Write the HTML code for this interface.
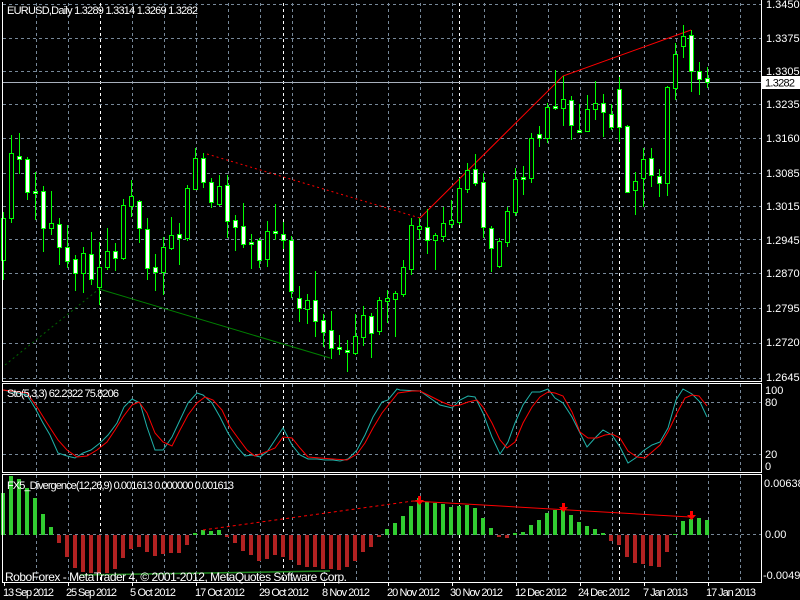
<!DOCTYPE html>
<html><head><meta charset="utf-8"><style>
html,body{margin:0;padding:0;background:#000;width:800px;height:600px;overflow:hidden}
svg{display:block}
text{font-family:"Liberation Sans",sans-serif;font-size:11px;fill:#fff}
</style></head><body>
<svg width="800" height="600" viewBox="0 0 800 600" xmlns="http://www.w3.org/2000/svg" shape-rendering="crispEdges">
<rect width="800" height="600" fill="#000"/>
<!-- grid vertical -->
<g stroke="#778899" stroke-dasharray="3,3" stroke-width="1">
<path d="M36.5 3V381M68.5 3V381M132.5 3V381M164.5 3V381M196.5 3V381M228.5 3V381M260.5 3V381M292.5 3V381M324.5 3V381M356.5 3V381M388.5 3V381M420.5 3V381M452.5 3V381M484.5 3V381M516.5 3V381M548.5 3V381M580.5 3V381M612.5 3V381M644.5 3V381M676.5 3V381M708.5 3V381M740.5 3V381"/>
<path d="M36.5 384V471M68.5 384V471M132.5 384V471M164.5 384V471M196.5 384V471M228.5 384V471M260.5 384V471M292.5 384V471M324.5 384V471M356.5 384V471M388.5 384V471M420.5 384V471M452.5 384V471M484.5 384V471M516.5 384V471M548.5 384V471M580.5 384V471M612.5 384V471M644.5 384V471M676.5 384V471M708.5 384V471M740.5 384V471"/>
<path d="M36.5 475V581M68.5 475V581M132.5 475V581M164.5 475V581M196.5 475V581M228.5 475V581M260.5 475V581M292.5 475V581M324.5 475V581M356.5 475V581M388.5 475V581M420.5 475V581M452.5 475V581M484.5 475V581M516.5 475V581M548.5 475V581M580.5 475V581M612.5 475V581M644.5 475V581M676.5 475V581M708.5 475V581M740.5 475V581"/>
<path d="M3 4.5H761M3 38.5H761M3 71.5H761M3 104.5H761M3 138.5H761M3 173.5H761M3 206.5H761M3 239.5H761M3 273.5H761M3 308.5H761M3 343.5H761M3 378.5H761"/>
<path d="M3 402.5H761M3 454.5H761M3 534.5H761"/>
</g>
<g stroke="#fff" stroke-dasharray="3,3" stroke-width="1">
<path d="M100.5 3V381M283.5 3V381M459.5 3V381M619.5 3V381M100.5 384V471M283.5 384V471M459.5 384V471M619.5 384V471M100.5 475V581M283.5 475V581M459.5 475V581M619.5 475V581"/>
</g>
<!-- bid line -->
<path d="M3 82.5H761" stroke="#a8b0bc" stroke-width="1"/>
<!-- trendlines -->
<g fill="none" shape-rendering="auto">
<path d="M207 154L420 218" stroke="#ff0000" stroke-dasharray="2,3"/>
<path d="M420 218L563 76L691 30" stroke="#ff0000"/>
<path d="M5 365L99 289" stroke="#006400" stroke-dasharray="2,3"/>
<path d="M99 289L330 358" stroke="#008000"/>
</g>
<!-- candles -->
<g stroke="#00ff00" stroke-width="1">
<path d="M3.5 212V280M11.5 135V223M19.5 133V174M27.5 157V200M35.5 172V220M43.5 186V252M51.5 191V235M59.5 218V265M67.5 225V268M75.5 255V291M83.5 247V293M91.5 232V285M99.5 242V305M107.5 228V270M115.5 243V271M123.5 199V260M131.5 180V217M139.5 200V243M147.5 218V280M155.5 254V291M163.5 237V295M171.5 217V250M179.5 223V265M187.5 185V241M195.5 148V190M203.5 153V188M211.5 178V208M219.5 175V206M227.5 175V238M235.5 215V251M243.5 203V248M251.5 234V269M259.5 238V268M267.5 221V267M275.5 204V240M283.5 222V249M291.5 236V298M299.5 286V322M307.5 294V324M315.5 271V337M323.5 314V347M331.5 311V359M339.5 335V355M347.5 340V372M355.5 314V355M363.5 306V346M371.5 313V358M379.5 297V335M387.5 290V323M395.5 291V337M403.5 260V297M411.5 218V275M419.5 218V239M427.5 209V254M435.5 233V270M443.5 207V242M451.5 200V228M459.5 178V225M467.5 163V193M475.5 154V186M483.5 173V238M491.5 226V272M499.5 238V268M507.5 207V247M515.5 168V216M523.5 166V195M531.5 133V183M539.5 126V147M547.5 103V143M555.5 70V110M563.5 76V126M571.5 96V140M579.5 104V133M587.5 95V132M595.5 81V120M603.5 94V137M611.5 104V130M619.5 77V142M627.5 125V193M635.5 172V215M643.5 148V207M651.5 148V187M659.5 169V197M667.5 86V196M675.5 43V100M683.5 25V58M691.5 30V92M699.5 62V95M707.5 67V88"/>
</g>
<g stroke="#00ff00" stroke-width="1" fill="#000">
<rect x="1.5" y="218.5" width="4" height="42"/>
<rect x="9.5" y="153.5" width="4" height="65"/>
<rect x="49.5" y="223.5" width="4" height="5"/>
<rect x="81.5" y="253.5" width="4" height="20"/>
<rect x="97.5" y="267.5" width="4" height="20"/>
<rect x="105.5" y="251.5" width="4" height="16"/>
<rect x="121.5" y="205.5" width="4" height="53"/>
<rect x="129.5" y="196.5" width="4" height="10"/>
<rect x="161.5" y="247.5" width="4" height="25"/>
<rect x="169.5" y="235.5" width="4" height="13"/>
<rect x="185.5" y="188.5" width="4" height="50"/>
<rect x="193.5" y="158.5" width="4" height="31"/>
<rect x="217.5" y="186.5" width="4" height="18"/>
<rect x="265.5" y="231.5" width="4" height="28"/>
<rect x="305.5" y="300.5" width="4" height="9"/>
<rect x="353.5" y="336.5" width="4" height="17"/>
<rect x="361.5" y="315.5" width="4" height="22"/>
<rect x="377.5" y="300.5" width="4" height="31"/>
<rect x="385.5" y="298.5" width="4" height="3"/>
<rect x="393.5" y="293.5" width="4" height="6"/>
<rect x="401.5" y="267.5" width="4" height="27"/>
<rect x="409.5" y="225.5" width="4" height="44"/>
<rect x="417.5" y="226.5" width="4" height="3"/>
<rect x="433.5" y="235.5" width="4" height="5"/>
<rect x="441.5" y="223.5" width="4" height="13"/>
<rect x="449.5" y="220.5" width="4" height="4"/>
<rect x="457.5" y="188.5" width="4" height="34"/>
<rect x="465.5" y="170.5" width="4" height="19"/>
<rect x="497.5" y="241.5" width="4" height="25"/>
<rect x="505.5" y="211.5" width="4" height="31"/>
<rect x="513.5" y="179.5" width="4" height="33"/>
<rect x="529.5" y="138.5" width="4" height="40"/>
<rect x="545.5" y="107.5" width="4" height="31"/>
<rect x="561.5" y="99.5" width="4" height="9"/>
<rect x="585.5" y="109.5" width="4" height="22"/>
<rect x="593.5" y="103.5" width="4" height="6"/>
<rect x="633.5" y="181.5" width="4" height="9"/>
<rect x="641.5" y="159.5" width="4" height="19"/>
<rect x="665.5" y="87.5" width="4" height="96"/>
<rect x="673.5" y="54.5" width="4" height="34"/>
<rect x="681.5" y="36.5" width="4" height="10"/>
</g>
<g stroke="#00ff00" stroke-width="1" fill="#fff">
<rect x="17.5" y="156.5" width="4" height="3"/>
<rect x="25.5" y="159.5" width="4" height="33"/>
<rect x="33.5" y="191.5" width="4" height="2"/>
<rect x="41.5" y="191.5" width="4" height="37"/>
<rect x="57.5" y="224.5" width="4" height="23"/>
<rect x="65.5" y="247.5" width="4" height="14"/>
<rect x="73.5" y="259.5" width="4" height="14"/>
<rect x="89.5" y="254.5" width="4" height="25"/>
<rect x="113.5" y="251.5" width="4" height="7"/>
<rect x="137.5" y="201.5" width="4" height="27"/>
<rect x="145.5" y="229.5" width="4" height="39"/>
<rect x="153.5" y="267.5" width="4" height="5"/>
<rect x="177.5" y="234.5" width="4" height="4"/>
<rect x="201.5" y="158.5" width="4" height="24"/>
<rect x="209.5" y="182.5" width="4" height="20"/>
<rect x="225.5" y="185.5" width="4" height="36"/>
<rect x="233.5" y="220.5" width="4" height="7"/>
<rect x="241.5" y="226.5" width="4" height="18"/>
<rect x="249.5" y="242.5" width="4" height="2"/>
<rect x="257.5" y="240.5" width="4" height="20"/>
<rect x="273.5" y="231.5" width="4" height="2"/>
<rect x="281.5" y="234.5" width="4" height="6"/>
<rect x="289.5" y="240.5" width="4" height="51"/>
<rect x="297.5" y="298.5" width="4" height="10"/>
<rect x="313.5" y="300.5" width="4" height="21"/>
<rect x="321.5" y="320.5" width="4" height="12"/>
<rect x="329.5" y="330.5" width="4" height="18"/>
<rect x="337.5" y="347.5" width="4" height="2"/>
<rect x="345.5" y="350.5" width="4" height="2"/>
<rect x="369.5" y="316.5" width="4" height="17"/>
<rect x="425.5" y="227.5" width="4" height="13"/>
<rect x="473.5" y="169.5" width="4" height="14"/>
<rect x="481.5" y="182.5" width="4" height="45"/>
<rect x="489.5" y="228.5" width="4" height="20"/>
<rect x="521.5" y="177.5" width="4" height="2"/>
<rect x="537.5" y="134.5" width="4" height="4"/>
<rect x="553.5" y="106.5" width="4" height="2"/>
<rect x="569.5" y="100.5" width="4" height="25"/>
<rect x="577.5" y="130.5" width="4" height="2"/>
<rect x="601.5" y="103.5" width="4" height="9"/>
<rect x="609.5" y="114.5" width="4" height="13"/>
<rect x="617.5" y="89.5" width="4" height="38"/>
<rect x="625.5" y="126.5" width="4" height="66"/>
<rect x="649.5" y="158.5" width="4" height="17"/>
<rect x="657.5" y="176.5" width="4" height="7"/>
<rect x="689.5" y="35.5" width="4" height="36"/>
<rect x="697.5" y="71.5" width="4" height="8"/>
<rect x="705.5" y="78.5" width="4" height="4"/>
</g>
<!-- stochastic -->
<g fill="none" shape-rendering="auto" stroke-width="1">
<polyline stroke="#20b2aa" points="3,390 27,395 35,408 43,423 50,435 58,453 67,456 75,458 83,453 91,450 100,443 108,435 117,423 124,407 132,399 140,403 147,427 155,450 163,450 172,437 180,420 188,403 197,393 203,395 212,403 220,417 228,433 237,447 245,456 252,455 260,457 267,452 275,440 283,428 292,445 300,455 308,459 317,459 325,460 333,460 340,461 348,459 357,450 365,435 373,417 382,402 388,400 397,389 400,390 420,391 430,398 440,405 452,408 460,400 468,396 475,397 483,413 492,437 500,454 508,442 515,423 523,405 532,392 540,392 548,389 555,398 563,403 572,417 580,433 587,447 595,438 603,430 612,435 620,447 628,463 637,457 643,451 652,445 660,442 668,428 676,400 683,389 692,394 700,402 707,417"/>
<polyline stroke="#ff0000" points="3,390 27,393 37,407 47,423 58,440 67,450 77,457 87,456 97,450 107,442 115,430 123,417 132,405 139,402 147,413 155,433 163,442 172,446 180,430 188,415 197,403 205,397 213,400 222,410 230,427 238,438 247,450 255,456 263,453 275,448 283,437 292,438 300,448 308,457 320,458 333,459 347,460 357,454 365,443 373,428 382,413 390,403 398,393 412,391 420,391 432,397 442,402 452,406 460,405 468,402 477,400 483,407 492,423 500,440 507,448 515,442 523,423 532,407 540,397 548,392 555,393 563,396 572,412 580,432 588,438 597,438 605,435 612,434 620,438 628,451 637,457 645,458 652,452 660,445 668,432 677,413 685,398 692,395 699,396 707,406"/>
</g>
<!-- MACD histogram -->
<g fill="#32cd32">
<rect x="1" y="493" width="4" height="42"/><rect x="9" y="476" width="4" height="59"/><rect x="17" y="479" width="4" height="56"/><rect x="25" y="488" width="4" height="47"/><rect x="33" y="498" width="4" height="37"/><rect x="41" y="514" width="4" height="21"/><rect x="49" y="527" width="4" height="8"/>
<rect x="193" y="533" width="4" height="2"/><rect x="201" y="530" width="4" height="5"/><rect x="209" y="531" width="4" height="4"/><rect x="217" y="530" width="4" height="5"/>
<rect x="385" y="529" width="4" height="6"/><rect x="393" y="523" width="4" height="12"/><rect x="401" y="516" width="4" height="19"/><rect x="409" y="506" width="4" height="29"/><rect x="417" y="498" width="4" height="37"/><rect x="425" y="502" width="4" height="33"/><rect x="433" y="503" width="4" height="32"/><rect x="441" y="504" width="4" height="31"/><rect x="449" y="507" width="4" height="28"/><rect x="457" y="506" width="4" height="29"/><rect x="465" y="505" width="4" height="30"/><rect x="473" y="508" width="4" height="27"/><rect x="481" y="518" width="4" height="17"/><rect x="489" y="528" width="4" height="7"/>
<rect x="513" y="533" width="4" height="2"/><rect x="521" y="532" width="4" height="3"/><rect x="529" y="525" width="4" height="10"/><rect x="537" y="520" width="4" height="15"/><rect x="545" y="513" width="4" height="22"/><rect x="553" y="510" width="4" height="25"/><rect x="561" y="510" width="4" height="25"/><rect x="569" y="515" width="4" height="20"/><rect x="577" y="522" width="4" height="13"/><rect x="585" y="526" width="4" height="9"/><rect x="593" y="529" width="4" height="6"/><rect x="601" y="533" width="4" height="2"/>
<rect x="673" y="534" width="4" height="1"/><rect x="681" y="521" width="4" height="14"/><rect x="689" y="519" width="4" height="16"/><rect x="697" y="518" width="4" height="17"/><rect x="705" y="520" width="4" height="15"/>
</g>
<g fill="#b22222">
<rect x="57" y="535" width="4" height="8"/><rect x="65" y="535" width="4" height="22"/><rect x="73" y="535" width="4" height="33"/><rect x="81" y="535" width="4" height="37"/><rect x="89" y="535" width="4" height="38"/><rect x="97" y="535" width="4" height="38"/><rect x="105" y="535" width="4" height="38"/><rect x="113" y="535" width="4" height="34"/><rect x="121" y="535" width="4" height="23"/><rect x="129" y="535" width="4" height="14"/><rect x="137" y="535" width="4" height="12"/><rect x="145" y="535" width="4" height="17"/><rect x="153" y="535" width="4" height="21"/><rect x="161" y="535" width="4" height="19"/><rect x="169" y="535" width="4" height="18"/><rect x="177" y="535" width="4" height="18"/><rect x="185" y="535" width="4" height="10"/>
<rect x="225" y="535" width="4" height="2"/><rect x="233" y="535" width="4" height="8"/><rect x="241" y="535" width="4" height="16"/><rect x="249" y="535" width="4" height="20"/><rect x="257" y="535" width="4" height="26"/><rect x="265" y="535" width="4" height="24"/><rect x="273" y="535" width="4" height="20"/><rect x="281" y="535" width="4" height="22"/><rect x="289" y="535" width="4" height="25"/><rect x="297" y="535" width="4" height="30"/><rect x="305" y="535" width="4" height="32"/><rect x="313" y="535" width="4" height="32"/><rect x="321" y="535" width="4" height="34"/><rect x="329" y="535" width="4" height="34"/><rect x="337" y="535" width="4" height="35"/><rect x="345" y="535" width="4" height="32"/><rect x="353" y="535" width="4" height="26"/><rect x="361" y="535" width="4" height="17"/><rect x="369" y="535" width="4" height="12"/><rect x="377" y="535" width="4" height="2"/>
<rect x="497" y="535" width="4" height="2"/><rect x="505" y="535" width="4" height="3"/>
<rect x="609" y="535" width="4" height="6"/><rect x="617" y="535" width="4" height="10"/><rect x="625" y="535" width="4" height="22"/><rect x="633" y="535" width="4" height="28"/><rect x="641" y="535" width="4" height="29"/><rect x="649" y="535" width="4" height="31"/><rect x="657" y="535" width="4" height="32"/><rect x="665" y="535" width="4" height="17"/>
</g>
<g fill="none" shape-rendering="auto">
<path d="M203 530L413 501" stroke="#ff0000" stroke-dasharray="3,3"/>
<path d="M413 501L690 517" stroke="#ff0000"/>
<path d="M80 575L330 571" stroke="#228b22" stroke-width="1.5"/>
</g>
<g fill="#ff0000" shape-rendering="auto">
<path d="M418 496h3v4h3l-4.5 5l-4.5-5h3z"/>
<path d="M562 503h3v4h3l-4.5 5l-4.5-5h3z"/>
<path d="M690 511h3v4h3l-4.5 5l-4.5-5h3z"/>
</g>
<!-- panel borders -->
<g fill="none" stroke="#fff" stroke-width="1">
<path d="M2.5 2V381.5H761.5V0"/>
<path d="M2.5 383.5H761.5V472.5H2.5Z"/>
<path d="M2.5 474.5H761.5V582.5H2.5Z"/>
</g>
<!-- price label box -->
<rect x="762" y="76" width="38" height="13" fill="#fff"/>
<text x="765" y="86.5" style="fill:#000" textLength="30">1.3282</text>
<!-- axis labels -->
<g>
<text x="766" y="8">1.3450</text>
<text x="766" y="42">1.3375</text>
<text x="766" y="75">1.3305</text>
<text x="766" y="108">1.3235</text>
<text x="766" y="142">1.3160</text>
<text x="766" y="177">1.3085</text>
<text x="766" y="210">1.3015</text>
<text x="766" y="244">1.2945</text>
<text x="766" y="277">1.2870</text>
<text x="766" y="312">1.2795</text>
<text x="766" y="346">1.2720</text>
<text x="766" y="381">1.2645</text>
<text x="765" y="394">100</text>
<text x="765" y="406">80</text>
<text x="765" y="458">20</text>
<text x="765" y="470">0</text>
<text x="764" y="487">0.006381</text>
<text x="765" y="538">0.00</text>
<text x="763" y="579">-0.00490</text>
</g>
<text x="7" y="14" textLength="191">EURUSD,Daily  1.3289 1.3314 1.3269 1.3282</text>
<text x="7" y="397" textLength="112">Sto(5,3,3) 62.2322 75.8206</text>
<text x="7" y="489" textLength="227">FX5_Divergence(12,26,9) 0.001613 0.000000 0.001613</text>
<text x="5" y="581" textLength="342" style="font-size:12px">RoboForex - MetaTrader 4, © 2001-2012, MetaQuotes Software Corp.</text>
<g>
<text x="3" y="596" textLength="51">13 Sep 2012</text>
<text x="66" y="596" textLength="51">25 Sep 2012</text>
<text x="130" y="596" textLength="46">5 Oct 2012</text>
<text x="195" y="596" textLength="50">17 Oct 2012</text>
<text x="259" y="596" textLength="50">29 Oct 2012</text>
<text x="322" y="596" textLength="48">8 Nov 2012</text>
<text x="387" y="596" textLength="53">20 Nov 2012</text>
<text x="450" y="596" textLength="53">30 Nov 2012</text>
<text x="515" y="596" textLength="52">12 Dec 2012</text>
<text x="578" y="596" textLength="52">24 Dec 2012</text>
<text x="643" y="596" textLength="45">7 Jan 2013</text>
<text x="706" y="596" textLength="50">17 Jan 2013</text>
</g>
<g stroke="#fff"><path d="M4.5 583v3M68.5 583v3M132.5 583v3M196.5 583v3M260.5 583v3M324.5 583v3M388.5 583v3M452.5 583v3M516.5 583v3M580.5 583v3M644.5 583v3M708.5 583v3"/></g>
</svg>
</body></html>
